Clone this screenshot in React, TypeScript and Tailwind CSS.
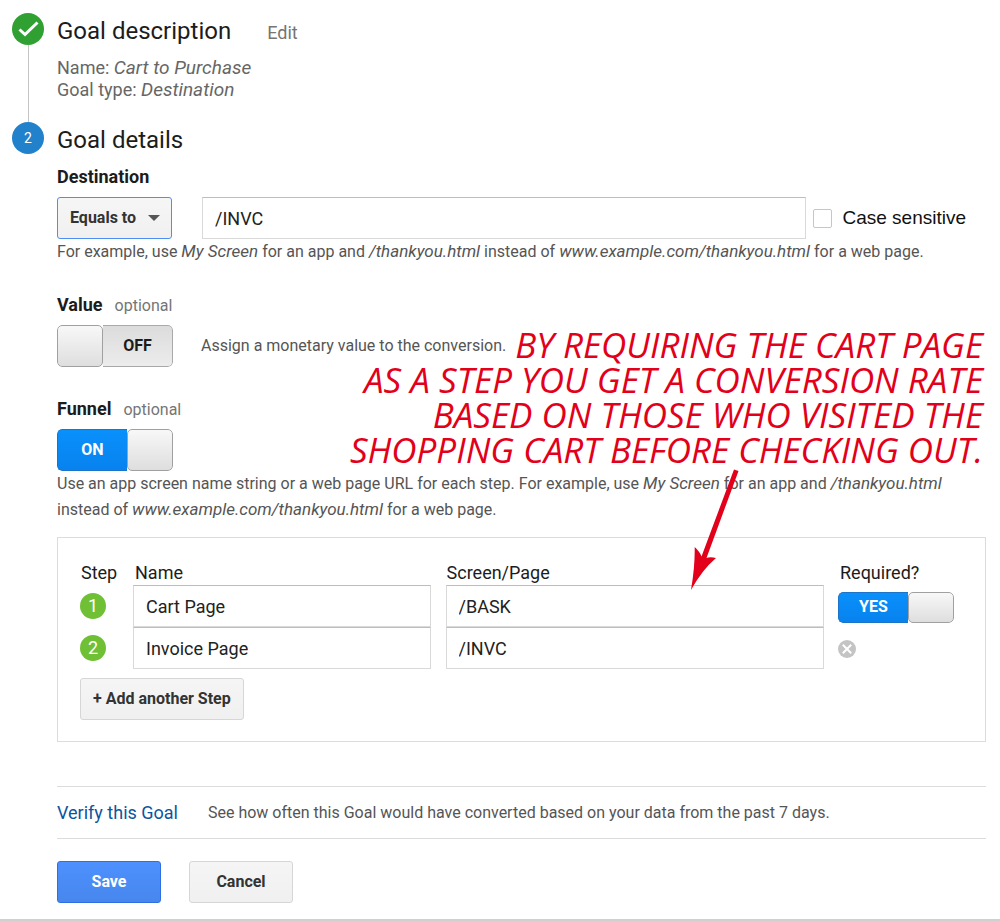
import { useState } from "react";

interface Step {
  id: number;
  name: string;
  page: string;
}

interface ToggleProps {
  label: string;
  on: string;
  off: string;
  checked: boolean;
  small?: boolean;
  onChange: (value: boolean) => void;
}

function Toggle({ label, on, off, checked, small, onChange }: ToggleProps) {
  return (
    <label
      className={`relative flex w-[116px] cursor-pointer overflow-hidden rounded-[5px] text-base font-bold ${
        small ? "h-[31px]" : "h-[42px]"
      } ${checked ? "flex-row" : "flex-row-reverse"}`}
    >
      <input
        type="checkbox"
        aria-label={label}
        className="sr-only"
        checked={checked}
        onChange={(e) => onChange(e.target.checked)}
      />
      <span
        className={`flex flex-1 items-center justify-center border ${
          checked
            ? "rounded-l-[5px] border-r-0 border-[#1b74c8] bg-linear-to-b from-[#0a90fb] to-[#0782ee] text-white"
            : "rounded-r-[5px] border-l-0 border-[#a9a9a9] bg-linear-to-b from-[#dcdcdc] to-[#ececec] text-[#1c1c1c]"
        }`}
      >
        {checked ? on : off}
      </span>
      <span className="w-[46px] rounded-[5px] border border-[#a0a0a0] bg-linear-to-b from-[#f8f8f8] to-[#dedede]" />
    </label>
  );
}

const inputStyle =
  "block h-[42px] w-full border border-[#d9d9d9] border-t-[#bdbdbd] bg-white px-3 text-lg text-[#222] focus:outline-none";

const grayButton =
  "rounded-[3px] border border-[#d6d6d6] bg-linear-to-b from-[#f5f5f5] to-[#f0f0f0] font-bold text-[#333]";

const helpText = "text-base leading-[26px] text-[#555] [&_em]:text-[17px] [&_em]:leading-none";

export default function App() {
  const [match, setMatch] = useState("Equals to");
  const [destination, setDestination] = useState("/INVC");
  const [caseSensitive, setCaseSensitive] = useState(false);
  const [value, setValue] = useState(false);
  const [funnel, setFunnel] = useState(true);
  const [required, setRequired] = useState(true);
  const [steps, setSteps] = useState<Step[]>([
    { id: 1, name: "Cart Page", page: "/BASK" },
    { id: 2, name: "Invoice Page", page: "/INVC" },
  ]);

  const updateStep = (id: number, changes: Partial<Step>) => {
    setSteps(steps.map((s) => (s.id === id ? { ...s, ...changes } : s)));
  };

  const addStep = () => {
    setSteps([...steps, { id: Date.now(), name: "", page: "" }]);
  };

  return (
    <main className="border-b-2 border-[#d0d0d0] bg-white pt-[13px] pr-[14px] pb-4 pl-3 font-[Roboto,sans-serif] text-[#1c1c1c]">
      {/* Goal description */}
      <section className="flex gap-[13px]">
        <div className="flex w-8 shrink-0 flex-col items-center">
          <span className="flex h-8 w-8 items-center justify-center rounded-full bg-[#30a033]">
            <svg viewBox="0 0 32 32" className="h-8 w-8" fill="none" stroke="#fff" strokeWidth="3">
              <path d="M7.5 16.5 L13 21.5 L25.5 9.5" />
            </svg>
          </span>
          <span className="w-px flex-1 bg-[#c4c4c4]" />
        </div>
        <div className="pb-[21px]">
          <div className="flex items-baseline gap-9">
            <h2 className="text-2xl leading-9">Goal description</h2>
            <a href="#edit" className="text-lg leading-6 text-[#757575]">
              Edit
            </a>
          </div>
          <div className="mt-2 text-lg leading-[22px] text-[#666] [&_em]:text-[19px] [&_em]:leading-none">
            <p>
              Name: <em>Cart to Purchase</em>
            </p>
            <p>
              Goal type: <em>Destination</em>
            </p>
          </div>
        </div>
      </section>

      {/* Goal details */}
      <section className="flex gap-[13px]">
        <span className="flex h-8 w-8 shrink-0 items-center justify-center rounded-full bg-[#2181cb] text-sm text-white">
          2
        </span>
        <div className="relative min-w-0 flex-1">
          <h2 className="text-2xl leading-9">Goal details</h2>

          <h3 className="mt-[7px] text-lg leading-6 font-bold">Destination</h3>
          <div className="mt-2 flex items-center">
            <div className="relative mr-[30px] shrink-0">
              <select
                aria-label="Match type"
                className="block h-[42px] w-[115px] appearance-none rounded-[3px] border border-[#4d8ff5] bg-linear-to-b from-[#f6f6f6] to-[#f0f0f0] pl-3 text-base font-bold text-[#333] focus:outline-none"
                value={match}
                onChange={(e) => setMatch(e.target.value)}
              >
                <option>Equals to</option>
                <option>Begins with</option>
                <option>Regular expression</option>
              </select>
              <svg viewBox="0 0 12 6" className="pointer-events-none absolute top-[18px] right-3 h-[6px] w-3">
                <path d="M0 0 H12 L6 6 Z" fill="#555" />
              </svg>
            </div>
            <input
              type="text"
              aria-label="Destination"
              className={inputStyle}
              value={destination}
              onChange={(e) => setDestination(e.target.value)}
            />
            <label className="mr-5 ml-[7px] flex shrink-0 items-center gap-[10px] font-['Liberation_Sans',sans-serif] text-[19px] leading-6 text-[#111]">
              <input
                type="checkbox"
                className="h-[19px] w-[19px] appearance-none rounded-[2px] border border-[#c6c6c6] bg-white checked:bg-[#4d90fe]"
                checked={caseSensitive}
                onChange={(e) => setCaseSensitive(e.target.checked)}
              />
              Case sensitive
            </label>
          </div>
          <p className={helpText}>
            For example, use <em>My Screen</em> for an app and <em>/thankyou.html</em> instead of{" "}
            <em>www.example.com/thankyou.html</em> for a web page.
          </p>

          <h3 className="mt-7 flex h-6 items-baseline gap-3 text-lg leading-6 font-bold">
            Value <span className="text-base font-normal text-[#757575]">optional</span>
          </h3>
          <div className="mt-2 flex items-center gap-7">
            <Toggle label="Value" on="ON" off="OFF" checked={value} onChange={setValue} />
            <p className={helpText}>Assign a monetary value to the conversion.</p>
          </div>

          <h3 className="mt-[30px] flex h-6 items-baseline gap-3 text-lg leading-6 font-bold">
            Funnel <span className="text-base font-normal text-[#757575]">optional</span>
          </h3>
          <div className="mt-2">
            <Toggle label="Funnel" on="ON" off="OFF" checked={funnel} onChange={setFunnel} />
          </div>
          <p className={helpText}>
            Use an app screen name string or a web page URL for each step. For example, use{" "}
            <em>My Screen</em> for an app and <em>/thankyou.html</em> instead of{" "}
            <em>www.example.com/thankyou.html</em> for a web page.
          </p>

          {/* Funnel steps */}
          <div className="mt-[14px] border border-[#dcdcdc] pt-[23px] pr-3 pb-[21px] pl-[22px]">
            <table className="w-full table-fixed text-lg">
              <thead>
                <tr className="text-left leading-6">
                  <th className="w-[53px] p-0 pl-px font-normal">Step</th>
                  <th className="w-[35%] p-0 pl-[2px] font-normal">Name</th>
                  <th className="p-0 pl-px font-normal">Screen/Page</th>
                  <th className="w-[135px] p-0 pl-[2px] font-normal">Required?</th>
                </tr>
              </thead>
              <tbody>
                {steps.map((step, i) => (
                  <tr key={step.id}>
                    <td className="p-0">
                      <span className="flex h-[26px] w-[26px] items-center justify-center rounded-full bg-[#70c036] text-white">
                        {i + 1}
                      </span>
                    </td>
                    <td className="p-0 pr-[15px]">
                      <input
                        type="text"
                        aria-label={`Step ${i + 1} name`}
                        className={inputStyle}
                        value={step.name}
                        onChange={(e) => updateStep(step.id, { name: e.target.value })}
                      />
                    </td>
                    <td className="p-0 pr-[14px]">
                      <input
                        type="text"
                        aria-label={`Step ${i + 1} screen or page`}
                        className={inputStyle}
                        value={step.page}
                        onChange={(e) => updateStep(step.id, { page: e.target.value })}
                      />
                    </td>
                    <td className="p-0 pt-[2px]">
                      {i === 0 ? (
                        <Toggle small label="Required" on="YES" off="NO" checked={required} onChange={setRequired} />
                      ) : (
                        <button
                          aria-label={`Remove step ${i + 1}`}
                          className="block"
                          onClick={() => setSteps(steps.filter((s) => s.id !== step.id))}
                        >
                          <svg viewBox="0 0 18 18" className="h-[18px] w-[18px]">
                            <circle cx="9" cy="9" r="9" fill="#c4c4c4" />
                            <path d="M4.8 4.8 L13.2 13.2 M13.2 4.8 L4.8 13.2" stroke="#fff" strokeWidth="2" />
                          </svg>
                        </button>
                      )}
                    </td>
                  </tr>
                ))}
              </tbody>
            </table>
            <button onClick={addStep} className={`${grayButton} mt-[9px] h-[42px] px-3`}>
              + Add another Step
            </button>
          </div>

          {/* Verify */}
          <div className="mt-11 flex h-[53px] items-center gap-[30px] border-y border-[#dcdcdc]">
            <a href="#verify" className="text-lg text-[#0b559f]">
              Verify this Goal
            </a>
            <p className={helpText}>
              See how often this Goal would have converted based on your data from the past 7 days.
            </p>
          </div>

          <div className="mt-[22px] flex gap-7">
            <button className="h-[42px] w-[104px] rounded-[3px] border border-[#2f6fe4] bg-linear-to-b from-[#4d90fe] to-[#4787ed] font-bold text-white">
              Save
            </button>
            <button className={`${grayButton} h-[42px] w-[104px]`}>Cancel</button>
          </div>

          {/* Note with the arrow that points at the first step */}
          <div className="pointer-events-none absolute top-[205px] right-[3px]">
            <p className="text-right font-['Open_Sans',sans-serif] text-[35px] leading-[35px] whitespace-nowrap text-[#e2001a] italic">
              BY REQUIRING THE CART PAGE
              <br />
              AS A STEP YOU GET A CONVERSION RATE
              <br />
              BASED ON THOSE WHO VISITED THE
              <br />
              SHOPPING CART BEFORE CHECKING OUT.
            </p>
            <svg viewBox="0 0 50 124" className="absolute top-[141px] right-[244px] h-[124px] w-[50px]" fill="#e2001a">
              <path d="M45 1.5 L49.5 3 L17.5 90 Q21 88.500 27 90 Q13 102 2 122 Q6 99 5.700 79 Q11 84 12.500 88.500 Z" />
            </svg>
          </div>
        </div>
      </section>
    </main>
  );
}
